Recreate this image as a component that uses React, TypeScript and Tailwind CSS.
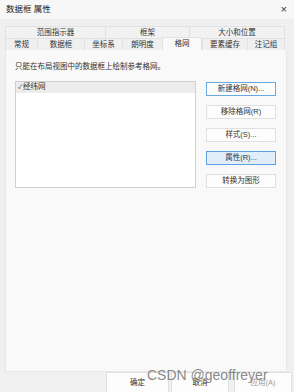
import React from "react";

const font = { fontFamily: '"Liberation Sans", "Noto Sans CJK SC", sans-serif' };

const backTabs = [
  { label: "范围指示器", w: "w-[100px]" },
  { label: "框架", w: "w-[84px]" },
  { label: "大小和位置", w: "w-[96px]" },
];

const frontTabs = [
  { label: "常规", w: "w-[32px]" },
  { label: "数据框", w: "w-[47px]" },
  { label: "坐标系", w: "w-[38px]" },
  { label: "朗明度", w: "w-[40px]" },
  { label: "格网", w: "w-[40px]", active: true },
  { label: "要素缓存", w: "w-[45px]" },
  { label: "注记组", w: "w-[38px]" },
];

const sideButtons = [
  { label: "新建格网(N)...", focus: true },
  { label: "移除格网(R)" },
  { label: "样式(S)..." },
  { label: "属性(R)...", hover: true },
  { label: "转换为图形" },
];

const App: React.FC = () => {
  return (
    <div
      className="relative w-[294px] h-[392px] overflow-hidden bg-[#f0f0f0] text-[#1a1a1a] flex flex-col"
      style={font}
    >
      {/* title bar */}
      <div className="h-[19px] shrink-0 bg-[#f7f7f7] flex items-center justify-between pl-[6px] pr-[7px]">
        <span className="text-[8.5px] leading-none">数据框 属性</span>
        <span className="text-[11px] leading-none text-[#333] font-light">×</span>
      </div>

      {/* tabs */}
      <div className="mt-[7px] px-[5px] shrink-0">
        <div className="flex h-[12px]">
          {backTabs.map((t) => (
            <div
              key={t.label}
              className={`${t.w} border border-b-0 border-r-0 last:border-r border-[#e2e2e2] bg-[#f2f2f2] flex items-center justify-center text-[7.5px] leading-none text-[#333]`}
            >
              {t.label}
            </div>
          ))}
        </div>
        <div className="flex h-[12px] items-end">
          {frontTabs.map((t) =>
            t.active ? (
              <div
                key={t.label}
                className={`${t.w} h-[13px] -mt-[1px] bg-[#f9f9f9] border border-b-0 border-[#e2e2e2] flex items-center justify-center text-[7.5px] leading-none text-[#333]`}
              >
                {t.label}
              </div>
            ) : (
              <div
                key={t.label}
                className={`${t.w} h-[12px] bg-[#f0f0f0] border border-b-0 border-r-0 border-[#e2e2e2] flex items-center justify-center text-[7.5px] leading-none text-[#333] last:border-r`}
              >
                {t.label}
              </div>
            )
          )}
        </div>
      </div>

      {/* panel */}
      <div className="mx-[5px] mr-[7px] h-[322px] shrink-0 bg-[#f9f9f9] border border-t-0 border-[#e8e8e8] pl-[9px] pt-[13px]">
        <div className="text-[7.5px] leading-none text-[#333]">
          只能在布局视图中的数据框上绘制参考格网。
        </div>
        <div className="mt-[10px] flex gap-[10px]">
          <div className="w-[181px] h-[107px] bg-white border border-[#d0d0d0]">
            <div className="h-[11px] bg-[#ececec] flex items-center pl-[2px] gap-[1px] text-[7.5px] leading-none text-[#333]">
              <span className="text-[6px] leading-none">✓</span>
              <span>经纬网</span>
            </div>
          </div>
          <div className="flex flex-col gap-[9px] pt-[1px]">
            {sideButtons.map((b) => (
              <div
                key={b.label}
                className={`w-[70px] h-[14px] flex items-center justify-center text-[7.5px] leading-none text-[#333] border ${
                  b.hover
                    ? "bg-[#e0eefa] border-[#5da0dc]"
                    : b.focus
                    ? "bg-[#fdfdfd] border-[#6aa8e0]"
                    : "bg-[#fdfdfd] border-[#e0e0e0]"
                }`}
              >
                {b.label}
              </div>
            ))}
          </div>
        </div>
      </div>

      {/* bottom buttons */}
      <div className="flex justify-end gap-[2px] pr-[2px]">
        <div className="w-[63px] h-[22px] bg-[#fdfdfd] border border-[#e0e0e0] flex items-center justify-center text-[7.5px] leading-none text-[#333]">
          确定
        </div>
        <div className="w-[58px] h-[22px] bg-[#fdfdfd] border border-[#e0e0e0] flex items-center justify-center text-[7.5px] leading-none text-[#333]">
          取消
        </div>
        <div className="ml-[3px] w-[58px] h-[22px] bg-[#fdfdfd] border border-[#e0e0e0] flex items-center justify-center text-[7.5px] leading-none text-[#999]">
          应用(A)
        </div>
      </div>

      {/* watermark */}
      <div className="absolute left-[147px] top-[368px] text-[14px] leading-none text-[#7a7a7a]/90 whitespace-nowrap">
        CSDN @geoffreyer
      </div>
    </div>
  );
};

export default App;
